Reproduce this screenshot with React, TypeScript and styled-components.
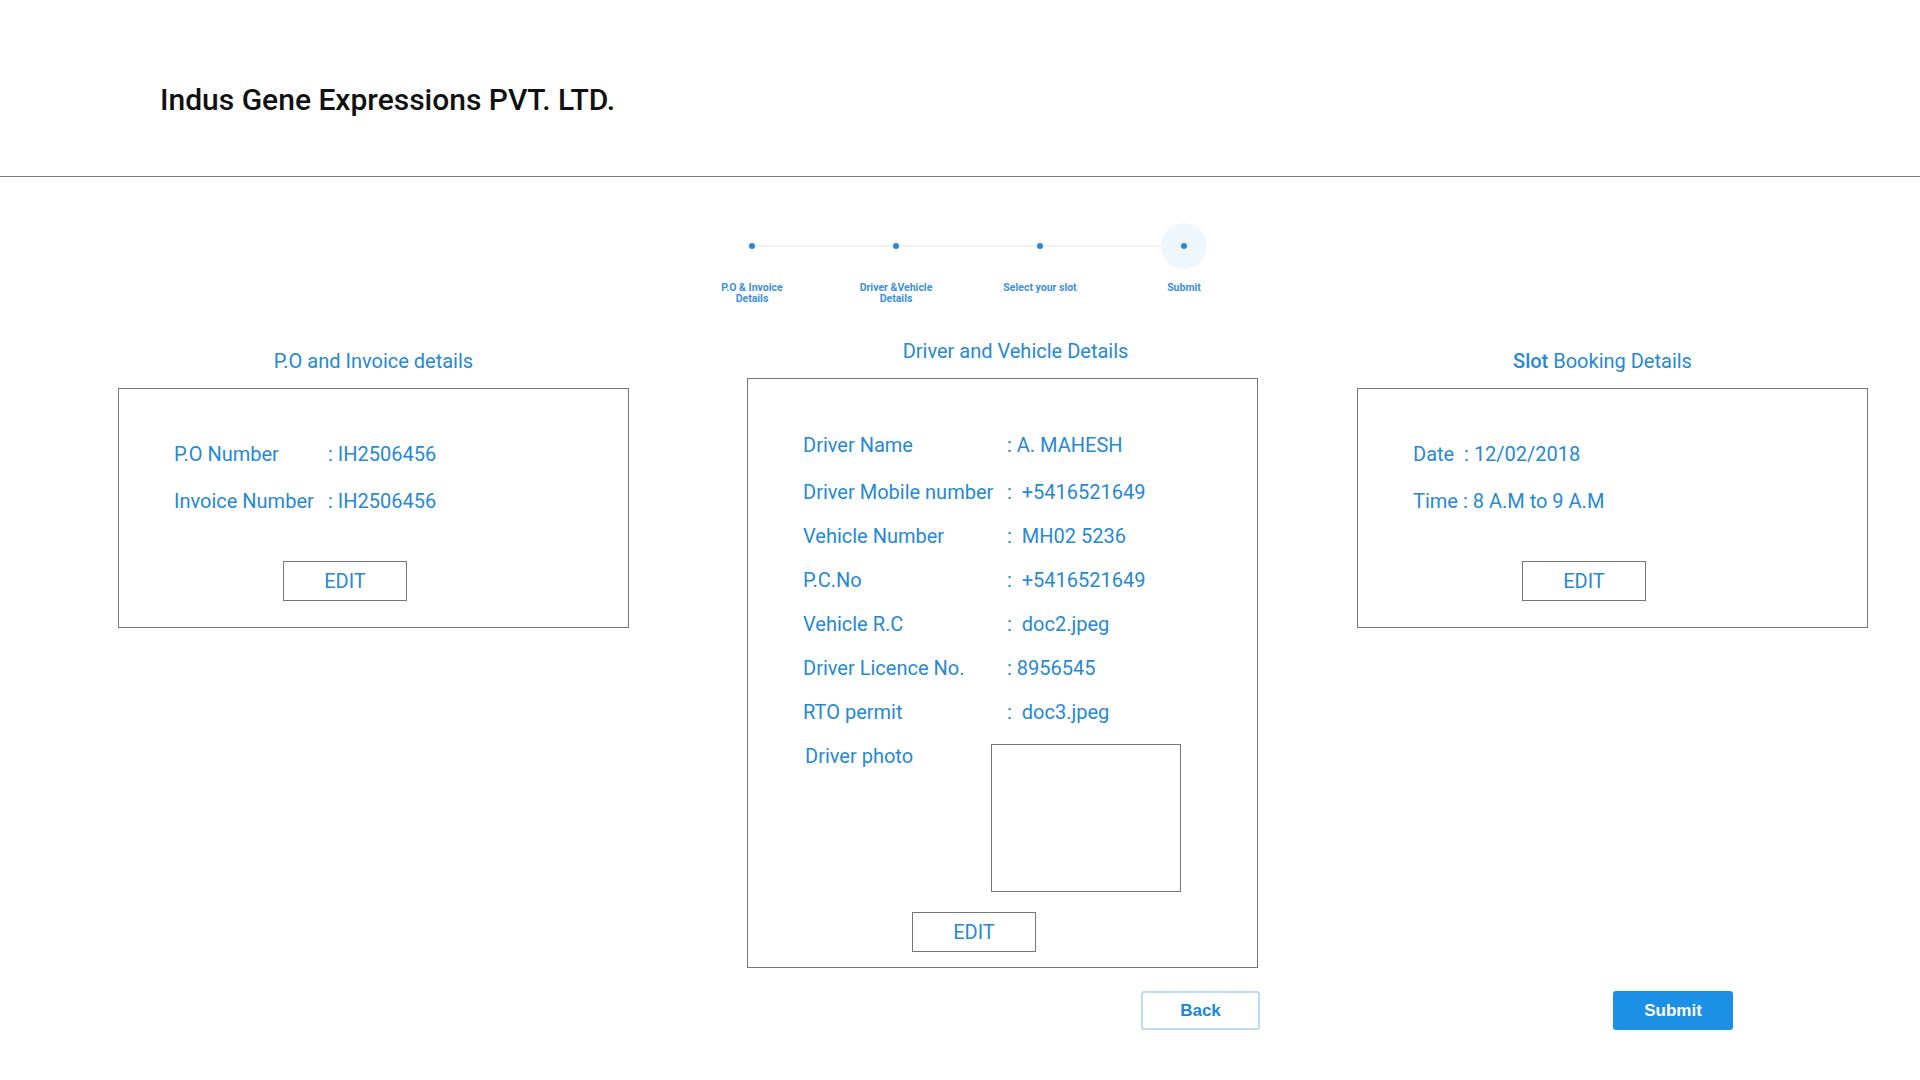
import React from "react";
import styled, { createGlobalStyle } from "styled-components";

const GlobalStyle = createGlobalStyle`
  html, body { margin: 0; padding: 0; background: #ffffff; }
  body { font-family: Roboto, "Liberation Sans", Arial, sans-serif; }
  * { box-sizing: border-box; }
`;

const BLUE = "#2788d4";
const GRAY = "#767676";

const Page = styled.div`
  width: 1920px;
  min-height: 1080px;
  background: #fff;
`;

const Header = styled.header`
  height: 177px;
  padding: 82px 0 0 160px;
  border-bottom: 1px solid #7a7a7a;
`;

const CompanyName = styled.h1`
  margin: 0;
  font-family: Roboto, sans-serif;
  font-weight: 500;
  font-size: 30px;
  line-height: 36px;
  color: #111;
`;

const Stepper = styled.ol`
  list-style: none;
  margin: 46px 0 0 680px;
  padding: 0;
  display: flex;
`;

const Step = styled.li`
  width: 144px;
  display: flex;
  flex-direction: column;
  align-items: center;
`;

const Marker = styled.div<{ $last?: boolean }>`
  position: relative;
  width: 100%;
  height: 46px;
  display: flex;
  align-items: center;
  justify-content: center;

  &::before {
    content: "";
    display: ${(p) => (p.$last ? "none" : "block")};
    position: absolute;
    left: 50%;
    width: 100%;
    top: 22px;
    height: 2px;
    background: #eef3f8;
  }
`;

const Halo = styled.span<{ $active?: boolean }>`
  position: relative;
  z-index: 1;
  width: 46px;
  height: 46px;
  border-radius: 50%;
  background: ${(p) => (p.$active ? "#eef6fe" : "transparent")};
  display: flex;
  align-items: center;
  justify-content: center;
`;

const Dot = styled.span`
  width: 6px;
  height: 6px;
  border-radius: 50%;
  background: #2a84dc;
`;

const StepLabel = styled.span`
  margin-top: 13px;
  font-family: Roboto, sans-serif;
  font-weight: 700;
  font-size: 10.5px;
  line-height: 11px;
  color: #3a90de;
  text-align: center;
  white-space: pre-line;
`;

const Columns = styled.main`
  display: flex;
  align-items: flex-start;
  margin: 35px 0 0 118px;
`;

const Column = styled.section<{ $offsetTop: number; $gapLeft: number }>`
  width: 511px;
  flex: none;
  margin-top: ${(p) => p.$offsetTop}px;
  margin-left: ${(p) => p.$gapLeft}px;
  display: flex;
  flex-direction: column;
`;

const SectionTitle = styled.h2<{ $shift: number }>`
  margin: 0 0 15px;
  font-family: Roboto, sans-serif;
  font-weight: 400;
  font-size: 20px;
  line-height: 24px;
  color: ${BLUE};
  text-align: center;
  padding-left: ${(p) => (p.$shift > 0 ? p.$shift * 2 : 0)}px;
  padding-right: ${(p) => (p.$shift < 0 ? -p.$shift * 2 : 0)}px;

  b { font-weight: 500; }
`;

const Card = styled.div<{ $padTop: number; $padBottom: number }>`
  border: 1px solid ${GRAY};
  padding: ${(p) => p.$padTop}px 0 ${(p) => p.$padBottom}px 55px;
  display: flex;
  flex-direction: column;
`;

const Rows = styled.div<{ $gap: number }>`
  display: flex;
  flex-direction: column;
  gap: ${(p) => p.$gap}px;
`;

const Row = styled.div<{ $labelWidth: number; $extraFirst?: number }>`
  display: grid;
  grid-template-columns: ${(p) => p.$labelWidth}px auto;
  font-family: Roboto, sans-serif;
  font-size: 20px;
  line-height: 24px;
  color: ${BLUE};
  white-space: pre;

  &:first-child {
    margin-bottom: ${(p) => p.$extraFirst || 0}px;
  }
`;

const PlainRow = styled.div`
  font-family: Roboto, sans-serif;
  font-size: 20px;
  line-height: 24px;
  color: ${BLUE};
  white-space: pre;
`;

const PhotoRow = styled.div`
  display: grid;
  grid-template-columns: 188px 190px;
  align-items: start;
`;

const PhotoLabel = styled.span`
  padding-left: 2px;
  font-family: Roboto, sans-serif;
  font-size: 20px;
  line-height: 24px;
  color: ${BLUE};
`;

const PhotoFrame = styled.div`
  width: 190px;
  height: 148px;
  border: 1px solid ${GRAY};
`;

const EditButton = styled.button<{ $top: number }>`
  margin: ${(p) => p.$top}px 0 0 109px;
  width: 124px;
  height: 40px;
  border: 1px solid ${GRAY};
  background: #fff;
  font-family: Roboto, sans-serif;
  font-size: 20px;
  color: ${BLUE};
  padding: 0;
  cursor: pointer;
`;

const Actions = styled.div`
  display: flex;
  margin: 23px 0 0 1141px;
  gap: 353px;
`;

const ActionButton = styled.button<{ $primary?: boolean }>`
  width: ${(p) => (p.$primary ? 120 : 119)}px;
  height: 39px;
  border-radius: 3px;
  border: 2px solid ${(p) => (p.$primary ? "#1b90e4" : "#bcdcf6")};
  background: ${(p) => (p.$primary ? "#1b90e4" : "#fff")};
  color: ${(p) => (p.$primary ? "#fff" : "#1c86d9")};
  font-family: "Liberation Sans", Arial, sans-serif;
  font-weight: 700;
  font-size: 17px;
  padding: 0;
  cursor: pointer;
`;

const steps = [
  { label: "P.O & Invoice\nDetails" },
  { label: "Driver &Vehicle\nDetails" },
  { label: "Select your slot" },
  { label: "Submit" },
];

const driverRows: [string, string][] = [
  ["Driver Name", ": A. MAHESH"],
  ["Driver Mobile number", ":  +5416521649"],
  ["Vehicle Number", ":  MH02 5236"],
  ["P.C.No", ":  +5416521649"],
  ["Vehicle R.C", ":  doc2.jpeg"],
  ["Driver Licence No.", ": 8956545"],
  ["RTO permit", ":  doc3.jpeg"],
];

export default function App() {
  return (
    <Page>
      <GlobalStyle />
      <Header>
        <CompanyName>Indus Gene Expressions PVT. LTD.</CompanyName>
      </Header>

      <Stepper>
        {steps.map((s, i) => {
          const last = i === steps.length - 1;
          return (
            <Step key={s.label}>
              <Marker $last={last}>
                <Halo $active={last}>
                  <Dot />
                </Halo>
              </Marker>
              <StepLabel>{s.label}</StepLabel>
            </Step>
          );
        })}
      </Stepper>

      <Columns>
        <Column $offsetTop={10} $gapLeft={0}>
          <SectionTitle $shift={0}>P.O and Invoice details</SectionTitle>
          <Card $padTop={53} $padBottom={26}>
            <Rows $gap={23}>
              <Row $labelWidth={154}>
                <span>P.O Number</span>
                <span>: IH2506456</span>
              </Row>
              <Row $labelWidth={154}>
                <span>Invoice Number</span>
                <span>: IH2506456</span>
              </Row>
            </Rows>
            <EditButton $top={48}>EDIT</EditButton>
          </Card>
        </Column>

        <Column $offsetTop={0} $gapLeft={118}>
          <SectionTitle $shift={13}>Driver and Vehicle Details</SectionTitle>
          <Card $padTop={54} $padBottom={15}>
            <Rows $gap={20}>
              {driverRows.map(([k, v]) => (
                <Row key={k} $labelWidth={204} $extraFirst={3}>
                  <span>{k}</span>
                  <span>{v}</span>
                </Row>
              ))}
              <PhotoRow>
                <PhotoLabel>Driver photo</PhotoLabel>
                <PhotoFrame />
              </PhotoRow>
            </Rows>
            <EditButton $top={20}>EDIT</EditButton>
          </Card>
        </Column>

        <Column $offsetTop={10} $gapLeft={99}>
          <SectionTitle $shift={-10}>
            <b>Slot</b> Booking Details
          </SectionTitle>
          <Card $padTop={53} $padBottom={26}>
            <Rows $gap={23}>
              <PlainRow>{"Date  : 12/02/2018"}</PlainRow>
              <PlainRow>{"Time : 8 A.M to 9 A.M"}</PlainRow>
            </Rows>
            <EditButton $top={48}>EDIT</EditButton>
          </Card>
        </Column>
      </Columns>

      <Actions>
        <ActionButton>Back</ActionButton>
        <ActionButton $primary>Submit</ActionButton>
      </Actions>
    </Page>
  );
}
